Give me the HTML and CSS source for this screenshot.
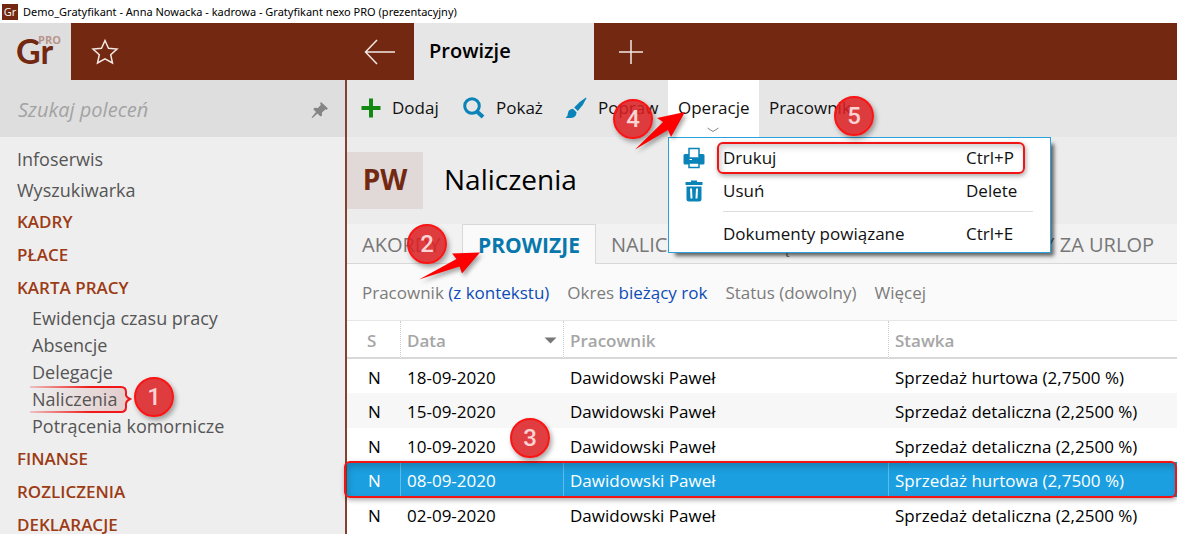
FILE: index.html
```html
<!DOCTYPE html>
<html lang="pl">
<head>
  <meta charset="UTF-8">
  <meta name="viewport" content="width=device-width, initial-scale=1.0">
  <title>Gratyfikant nexo PRO</title>
  <link rel="stylesheet" href="styles.css">
</head>
<body>
  <div class="titlebar">
    <span class="app-icon">Gr</span>
    <span>Demo_Gratyfikant - Anna Nowacka - kadrowa - Gratyfikant nexo PRO (prezentacyjny)</span>
  </div>

  <header class="topbar">
    <div class="topbar-left">
      <div class="logo"><span>Gr</span><sup>PRO</sup></div>
      <button class="icon-button favorites" aria-label="Ulubione">
        <svg width="28" height="28" viewBox="0 0 28 28"><path d="M14 2.500L17.500 10.200L26 11L19.700 16.700L21.500 25L14 20.800L6.500 25L8.300 16.700L2 11L10.500 10.200Z"/></svg>
      </button>
      <button class="icon-button back" aria-label="Wstecz">
        <svg width="32" height="26" viewBox="0 0 32 26"><path d="M13 1L1.500 13L13 25M1.500 13H31"/></svg>
      </button>
    </div>
    <div class="window-tab">Prowizje</div>
    <button class="icon-button add-tab" aria-label="Nowa karta">
      <svg width="26" height="26" viewBox="0 0 26 26"><path d="M13 1V25M1 13H25"/></svg>
    </button>
  </header>

  <div class="workspace">
    <aside class="sidebar">
      <div class="search">
        <input type="text" placeholder="Szukaj poleceń" aria-label="Szukaj poleceń">
        <svg width="18" height="18" viewBox="0 0 18 18"><path d="M10 1L17 7.500L15.500 8.800L14.200 8.400L11 11.500L11 14.500L9.500 15.500L6.500 12.600L1.500 17L0.500 16.500L5 11L2.300 8.300L3.500 6.800L6.800 7L9.800 4L9.200 2.200Z"/></svg>
      </div>
      <nav class="menu">
        <a class="menu-item" href="#">Infoserwis</a>
        <a class="menu-item" href="#">Wyszukiwarka</a>
        <a class="menu-section" href="#">KADRY</a>
        <a class="menu-section" href="#">PŁACE</a>
        <a class="menu-section" href="#">KARTA PRACY</a>
        <div class="submenu">
          <a href="#">Ewidencja czasu pracy</a>
          <a href="#">Absencje</a>
          <a href="#">Delegacje</a>
          <div class="marked">
            <svg class="callout" width="104" height="30" viewBox="0 0 104 30">
              <defs>
                <linearGradient id="fade-line" gradientUnits="userSpaceOnUse" x1="0" y1="0" x2="104" y2="0">
                  <stop offset="0" stop-color="#f01818" stop-opacity="0.2"/>
                  <stop offset="0.6" stop-color="#f01818"/>
                </linearGradient>
                <linearGradient id="fade-fill">
                  <stop offset="0" stop-color="#b03030" stop-opacity="0"/>
                  <stop offset="1" stop-color="#b03030" stop-opacity="0.18"/>
                </linearGradient>
              </defs>
              <path d="M1 2H92Q97 2 97 7V10Q97 12 101 14Q97 16 97 19V22Q97 27 92 27H1Z" fill="url(#fade-fill)"/>
              <path d="M1 2H92Q97 2 97 7V10Q97 12 101 14Q97 16 97 19V22Q97 27 92 27H1" fill="none" stroke="url(#fade-line)" stroke-width="2"/>
            </svg>
            <a href="#">Naliczenia</a>
            <span class="badge badge-1">1</span>
          </div>
          <a href="#">Potrącenia komornicze</a>
        </div>
        <a class="menu-section" href="#">FINANSE</a>
        <a class="menu-section" href="#">ROZLICZENIA</a>
        <a class="menu-section" href="#">DEKLARACJE</a>
      </nav>
    </aside>

    <main class="content">
      <div class="toolbar">
        <button class="tool">
          <svg width="20" height="20" viewBox="0 0 20 20"><path d="M8 0.500H12V8H19.500V12H12V19.500H8V12H0.500V8H8Z" fill="#128a12"/></svg>
          Dodaj
        </button>
        <button class="tool">
          <svg width="22" height="22" viewBox="0 0 22 22"><circle cx="9" cy="9" r="7.300" fill="none" stroke="#0a84b8" stroke-width="3"/><path d="M14 14.500L20 20" stroke="#0a84b8" stroke-width="4"/></svg>
          Pokaż
        </button>
        <button class="tool">
          <svg width="22" height="22" viewBox="0 0 22 22" fill="#0a84b8"><path d="M21 0.500L21.500 1.200Q18.500 8 12.800 14L9.200 10.500Q14.500 4.300 21 0.500Z"/><path d="M8 11.700L11.500 15.200Q11.500 20.500 6 21H0.500Q3 19 3 16Q3.500 12 8 11.700Z"/></svg>
          Popraw
        </button>
        <div class="operations">
          <button class="tool-open">Operacje</button>
          <svg class="chevron" width="12" height="6" viewBox="0 0 12 6"><path d="M0.500 1L6 4.500L11.500 1"/></svg>
          <div class="dropdown">
            <button class="option">
              <svg width="22" height="22" viewBox="0 0 22 22"><path d="M2 7H20Q21.500 7 21.500 8.500V16Q21.500 17.500 20 17.500H2Q0.500 17.500 0.500 16V8.500Q0.500 7 2 7Z" fill="#0a84b8"/><path d="M6 10.500V1.500H16V10.500" fill="#fff" stroke="#0a84b8" stroke-width="1.500"/><path d="M5 10.500H17V15H5Z" fill="#0a84b8"/><path d="M6 16H16V20.500H6Z" fill="#fff" stroke="#0a84b8" stroke-width="1.500"/><path d="M6.500 12.500H9" stroke="#fff"/></svg>
              <span>Drukuj</span><kbd>Ctrl+P</kbd>
            </button>
            <button class="option">
              <svg width="22" height="22" viewBox="0 0 22 22"><path d="M2.500 2H8V0.500H14V2H19.500V5H2.500ZM3.500 6.500H18.500V19Q18.500 21.500 16 21.500H6Q3.500 21.500 3.500 19Z" fill="#0a84b8"/><path d="M8 8.500L8.500 18.500M14 8.500L13.500 18.500" stroke="#fff" stroke-width="2"/></svg>
              <span>Usuń</span><kbd>Delete</kbd>
            </button>
            <hr>
            <button class="option"><i></i><span>Dokumenty powiązane</span><kbd>Ctrl+E</kbd></button>
            <div class="option-mark"></div>
          </div>
          <svg class="arrow arrow-4" width="52" height="42" viewBox="0 0 52 42"><path d="M51 2L23 8L29 12L1 39.500L34 20L37 27Z"/></svg>
          <span class="badge badge-4">4</span>
          <span class="badge badge-5">5</span>
        </div>
        <button class="tool-open">Pracownik</button>
      </div>

      <div class="page-title">
        <div class="symbol">PW</div>
        <h1>Naliczenia</h1>
      </div>

      <div class="tabs">
        <button>AKORDY</button>
        <div class="tab-active">
          <button>PROWIZJE</button>
          <svg class="arrow arrow-2" width="64" height="30" viewBox="0 0 64 30"><path d="M62 1.500L34 2.500L38.500 8L1 28.500L41.500 15.500L44 22.500Z"/></svg>
          <span class="badge badge-2">2</span>
        </div>
        <button>NALICZENIA MIESIĘCZNE</button>
        <button class="tab-last">EKWIWALENTY ZA URLOP</button>
      </div>

      <div class="filters">
        <span>Pracownik <a href="#">(z kontekstu)</a></span>
        <span>Okres <a href="#">bieżący rok</a></span>
        <span>Status (dowolny)</span>
        <span>Więcej</span>
      </div>

      <table class="grid">
        <thead>
          <tr>
            <th class="col-s">S</th>
            <th class="col-date">Data <svg width="13" height="7" viewBox="0 0 13 7"><path d="M0.500 0.500H12.500L6.500 6.500Z"/></svg></th>
            <th class="col-person">Pracownik</th>
            <th>Stawka</th>
          </tr>
        </thead>
        <tbody>
          <tr><td>N</td><td>18-09-2020</td><td>Dawidowski Paweł</td><td>Sprzedaż hurtowa (2,7500 %)</td></tr>
          <tr><td>N</td><td>15-09-2020</td><td>Dawidowski Paweł</td><td>Sprzedaż detaliczna (2,2500 %)</td></tr>
          <tr><td>N</td><td>10-09-2020</td><td>Dawidowski Paweł</td><td>Sprzedaż detaliczna (2,2500 %)</td></tr>
          <tr class="selected">
            <td>N<div class="row-mark"></div><span class="badge badge-3">3</span></td>
            <td>08-09-2020</td><td>Dawidowski Paweł</td><td>Sprzedaż hurtowa (2,7500 %)</td>
          </tr>
          <tr><td>N</td><td>02-09-2020</td><td>Dawidowski Paweł</td><td>Sprzedaż detaliczna (2,2500 %)</td></tr>
        </tbody>
      </table>
    </main>
  </div>
</body>
</html>
```
FILE: styles.css
```css
* {
  box-sizing: border-box;
}
body {
  margin: 0;
  height: 100vh;
  display: flex;
  flex-direction: column;
  overflow: hidden;
  font-family: "Open Sans", "Noto Sans", sans-serif;
  font-size: 17px;
  color: #111;
  background: #fff;
}
button {
  padding: 0;
  border: 0;
  background: none;
  font: inherit;
  color: inherit;
  white-space: nowrap;
}
a {
  color: inherit;
  text-decoration: none;
}

/* window title */
.titlebar {
  display: flex;
  flex: none;
  align-items: center;
  gap: 5px;
  height: 23px;
  padding-left: 2px;
  font-family: "Noto Sans", sans-serif;
  font-size: 11px;
  color: #000;
}
.app-icon {
  width: 16px;
  height: 16px;
  background: #722811;
  color: #fff;
  font: 11px/16px "Open Sans", sans-serif;
  text-align: center;
}

/* top bar */
.topbar {
  display: flex;
  flex: none;
  height: 57px;
  background: #722811;
}
.topbar-left {
  display: flex;
  width: 414px;
}
.logo {
  position: relative;
  width: 71px;
  padding-left: 16px;
  background: #dedede;
  color: #722811;
  font: bold 34px/55px Lato, sans-serif;
}
.logo sup {
  position: absolute;
  left: 38px;
  top: 10px;
  color: #b8958a;
  font: bold 11px/14px "Open Sans", sans-serif;
}
.icon-button {
  display: flex;
  align-items: center;
}
.icon-button svg {
  fill: none;
  stroke: #f4e8e4;
  stroke-width: 1.500px;
}
.favorites {
  padding-left: 20px;
}
.back {
  margin-left: auto;
  padding-right: 18px;
}
.window-tab {
  width: 180px;
  padding-left: 15px;
  background: #e6e6e6;
  color: #000;
  font-size: 20px;
  font-weight: 600;
  line-height: 55px;
}
.add-tab {
  padding-left: 24px;
}

.workspace {
  display: flex;
  flex: 1;
  min-height: 0;
}

/* sidebar */
.sidebar {
  flex: none;
  width: 347px;
  border-right: 2px solid #81432e;
  background: #eee;
}
.search {
  display: flex;
  align-items: center;
  justify-content: space-between;
  height: 57px;
  padding: 2px 16px 0 18px;
  background: #dedede;
}
.search input {
  flex: 1;
  min-width: 0;
  padding: 0;
  border: 0;
  background: none;
  font: italic 20px "Open Sans", sans-serif;
}
.search input::placeholder {
  color: #a3a3a3;
}
.search svg {
  fill: #858585;
}
.menu {
  display: flex;
  flex-direction: column;
  padding: 7px 0 0 17px;
  color: #555;
  font-size: 18px;
}
.menu-item {
  line-height: 31px;
}
.menu-section {
  height: 33px;
  color: #9c3b14;
  font-size: 17px;
  font-weight: 600;
  line-height: 31px;
}
.submenu {
  display: flex;
  flex-direction: column;
  padding: 0 0 3px 15px;
  line-height: 27px;
}
.marked {
  position: relative;
}
.marked a {
  position: relative;
}
.callout {
  position: absolute;
  left: -3px;
  top: -1px;
}

/* numbered marks */
.badge {
  position: absolute;
  z-index: 5;
  width: 40px;
  height: 40px;
  border: 2px solid #fa1414;
  border-radius: 50%;
  background: rgba(220, 30, 34, 0.86);
  box-shadow: 2px 3px 5px rgba(0, 0, 0, 0.35);
  color: #fad4d4;
  font: 500 24px/36px Roboto, sans-serif;
  text-align: center;
}
.badge-1 {
  left: 102px;
  top: -9px;
}
.badge-2 {
  left: -56px;
  top: -1px;
}
.badge-3 {
  left: 163px;
  top: -44px;
}
.badge-4 {
  left: -55px;
  top: 19px;
}
.badge-5 {
  left: 166px;
  top: 16px;
}
.arrow {
  position: absolute;
  z-index: 6;
  fill: #f00;
  filter: drop-shadow(2px 3px 2px rgba(0, 0, 0, 0.35));
}
.arrow-2 {
  left: -45px;
  top: 26px;
}
.arrow-4 {
  left: -34px;
  top: 30px;
}

/* toolbar */
.content {
  flex: 1;
  min-width: 0;
  background: #fff;
}
.toolbar {
  display: flex;
  height: 57px;
  padding-left: 14px;
  background: #e6e6e6;
}
.tool {
  display: flex;
  align-items: center;
  gap: 11px;
  width: 102px;
  height: 55px;
}
.operations {
  position: relative;
  width: 91px;
  margin-left: 1px;
  background: #fff;
}
.tool-open {
  height: 55px;
  padding-left: 10px;
}
.chevron {
  position: absolute;
  left: 39px;
  top: 47px;
  fill: none;
  stroke: #888;
}
.dropdown {
  position: absolute;
  z-index: 4;
  left: 0;
  top: 57px;
  width: 383px;
  padding: 3px 17px 2px 14px;
  border: 1px solid #2aa0dc;
  background: #fff;
  box-shadow: 5px 5px 4px -2px rgba(0, 0, 0, 0.6);
}
.option {
  display: grid;
  grid-template-columns: 40px 1fr 67px;
  align-items: center;
  width: 100%;
  height: 33px;
  text-align: left;
}
.option kbd {
  font: inherit;
}
.dropdown hr {
  height: 1px;
  margin: 4px 0 5px 40px;
  border: 0;
  background: #ddd;
}
.option-mark {
  position: absolute;
  left: 48px;
  top: 4px;
  width: 308px;
  height: 32px;
  border: 2px solid #f01414;
  border-radius: 6px;
  box-shadow: 1px 2px 5px rgba(0, 0, 0, 0.35), inset 2px 3px 6px rgba(0, 0, 0, 0.2);
}

/* page heading */
.page-title {
  display: flex;
  align-items: center;
  gap: 21px;
  height: 87px;
  background: #ececec;
}
.symbol {
  width: 76px;
  height: 57px;
  background: #e1d9d7;
  color: #722811;
  font-size: 28px;
  font-weight: 700;
  line-height: 54px;
  text-align: center;
}
.page-title h1 {
  margin: 0;
  color: #000;
  font-size: 28px;
  font-weight: 400;
  line-height: 54px;
  padding-bottom: 3px;
}

.tabs {
  display: flex;
  height: 40px;
  border-bottom: 1px solid #d8d8d8;
  background: #f2f2f2;
  color: #777;
  font-size: 20px;
}
.tabs > button {
  padding: 2px 16px 0 15px;
}
.tabs > button:first-child {
  width: 115px;
  text-align: left;
}
.tab-active {
  position: relative;
  width: 134px;
  height: 40px;
  border: 1px solid #d8d8d8;
  border-bottom: 0;
  background: #fafafa;
}
.tab-active > button {
  width: 100%;
  height: 39px;
  padding-top: 1px;
  color: #0878ac;
  font-size: 21px;
  font-weight: 700;
}
.tabs > .tab-last {
  margin-left: auto;
  padding-right: 23px;
}

.filters {
  display: flex;
  align-items: center;
  gap: 18px;
  height: 57px;
  padding-left: 15px;
  background: #fafafa;
  border-bottom: 1px solid #e6e6e6;
  color: #7c7c7c;
}
.filters a {
  color: #0c4cb8;
}

/* data grid */
.grid {
  width: 100%;
  border-collapse: separate;
  border-spacing: 0;
  table-layout: fixed;
  white-space: nowrap;
  color: #000;
}
.grid th {
  height: 38px;
  padding: 2px 0 0 7px;
  border-bottom: 2px solid #d8d8d8;
  color: #a6a6a6;
  font-weight: 600;
  text-align: left;
}
.grid th + th {
  border-left: 1px dotted #ccc;
  padding-left: 6px;
}
.grid .col-s {
  width: 53px;
  padding-left: 20px;
}
.grid .col-date {
  width: 163px;
}
.grid .col-person {
  width: 325px;
}
.col-date svg {
  float: right;
  margin: 8px 6px 0 0;
  fill: #777;
}
.grid td {
  height: 34px;
  padding: 2px 0 0 7px;
}
.grid td:first-child {
  padding-left: 21px;
}
.grid tr:nth-child(even) td {
  height: 35px;
  background: #f7f7f7;
}
.grid .selected {
  position: relative;
}
.grid tr.selected td {
  background: #1c9fe0;
  color: #fff;
}
.grid .selected td + td {
  border-left: 1px solid #5cbcea;
  padding-left: 6px;
}
.row-mark {
  position: absolute;
  left: -3px;
  right: 0;
  top: -1px;
  bottom: -1px;
  border: 2px solid #f01414;
  border-radius: 6px;
  box-shadow: 1px 2px 5px rgba(0, 0, 0, 0.35), inset 2px 4px 7px rgba(0, 0, 0, 0.2);
}
```
